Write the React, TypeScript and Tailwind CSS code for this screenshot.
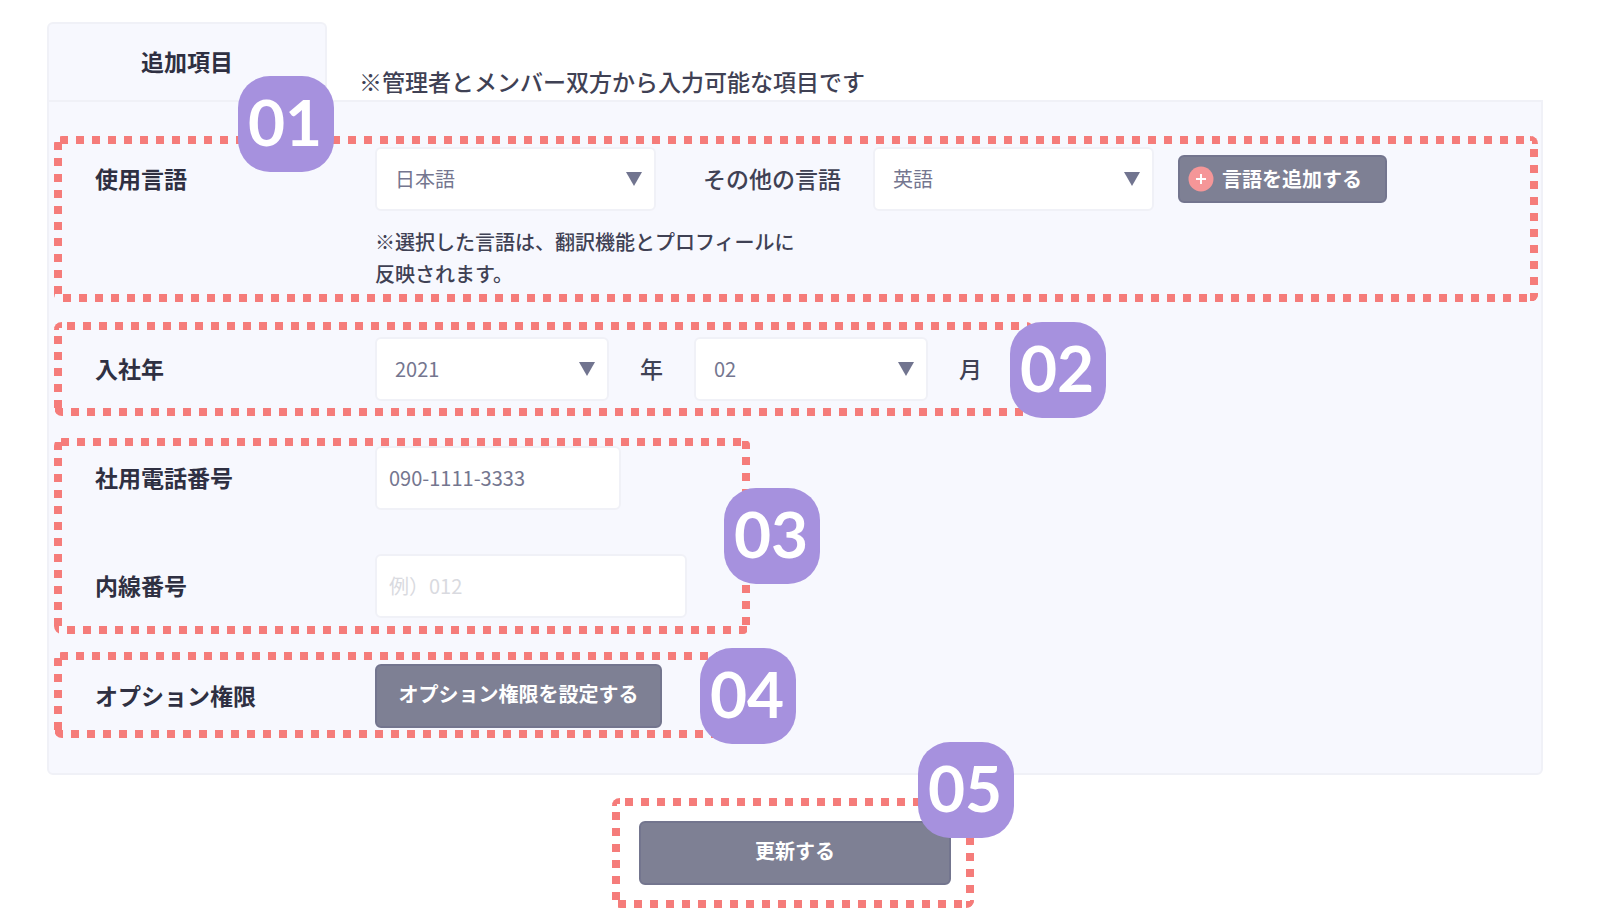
import type { ReactNode } from "react";

type Phases = { top: number; right?: number; bottom: number; left: number };

/* Square-dotted outline. Each phase is where a side's first dot starts. */
function DottedFrame({ top, right, bottom, left }: Phases) {
  const line = { stroke: "#f57c7a", strokeWidth: 8, strokeDasharray: "8 8" };
  return (
    <svg className="pointer-events-none absolute inset-0 size-full rounded-lg" aria-hidden="true">
      <line {...line} x1="0" y1="4" x2="100%" y2="4" strokeDashoffset={-top} />
      <line {...line} x1="4" y1="0" x2="4" y2="100%" strokeDashoffset={-left} />
      <svg y="100%" overflow="visible">
        <line {...line} x1="0" y1="-4" x2="100%" y2="-4" strokeDashoffset={-bottom} />
      </svg>
      {right !== undefined && (
        <svg x="100%" overflow="visible">
          <line {...line} x1="-4" y1="0" x2="-4" y2="100%" strokeDashoffset={-right} />
        </svg>
      )}
    </svg>
  );
}

function Badge({ children, place }: { children: string; place: string }) {
  return (
    <span
      className={`absolute z-10 flex size-24 items-center justify-center rounded-4xl bg-[#a691de] pr-0.5 pb-1 font-['Lato',sans-serif] text-[64px] leading-none font-bold text-white ${place}`}
    >
      {children}
    </span>
  );
}

function Group({ className, phases, children }: { className: string; phases: Phases; children: ReactNode }) {
  return (
    <div className={`relative ${className}`}>
      {children}
      <DottedFrame {...phases} />
    </div>
  );
}

function Row({ label, htmlFor, children }: { label: string; htmlFor: string; children: ReactNode }) {
  return (
    <div className="flex items-center">
      <label
        htmlFor={htmlFor}
        className="w-[321px] shrink-0 pb-0.5 pl-[41px] text-[23px] leading-8 font-bold text-[#2f3042]"
      >
        {label}
      </label>
      {children}
    </div>
  );
}

function Select({ id, label, width, options }: { id: string; label?: string; width: string; options: string[] }) {
  return (
    <div className={`relative shrink-0 ${width}`}>
      <select
        id={id}
        aria-label={label}
        className="h-16 w-full appearance-none rounded-md border-2 border-[#f0f1f7] bg-white px-[18px] text-xl text-[#74768f]"
      >
        {options.map((o) => (
          <option key={o}>{o}</option>
        ))}
      </select>
      <svg
        className="pointer-events-none absolute top-[25px] right-3.5 h-3.5 w-4"
        viewBox="0 0 16 14"
        fill="#71748f"
        aria-hidden="true"
      >
        <path d="M0 0h16L8 14z" />
      </svg>
    </div>
  );
}

const inputStyle =
  "h-16 rounded-md border-2 border-[#f0f1f7] bg-white px-3 text-xl text-[#74768f] placeholder:text-[#d9dae0]";
const buttonStyle = "border-2 border-[#73758e] bg-[#7e8094] text-xl font-bold text-white";

export default function App() {
  return (
    <form
      className="min-h-screen bg-white pt-[22px] pr-[57px] pb-3 pl-[47px] font-['Noto_Sans_CJK_JP','Noto_Sans',sans-serif] text-[#3f4154]"
      onSubmit={(e) => e.preventDefault()}
    >
      <header className="flex items-end">
        <h1 className="flex h-[78px] w-[280px] shrink-0 items-center justify-center rounded-t-md border-2 border-b-0 border-[#f0f1f7] bg-[#f7f8fe] pb-0.5 text-[23px] font-bold text-[#2f3042]">
          追加項目
        </h1>
        <p className="ml-8 pb-0.5 text-[23px] leading-[34px] font-medium">
          ※管理者とメンバー双方から入力可能な項目です
        </p>
      </header>

      <section className="rounded-b-md border-2 border-[#f0f1f7] bg-[#f7f8fe] pt-[34px] pr-[3px] pb-[35px] pl-[5px]">
        <Group className="pt-[11px] pb-[11px]" phases={{ top: 6, right: 13, bottom: 9, left: 6 }}>
          <Row label="使用言語" htmlFor="language">
            <Select id="language" width="w-[281px]" options={["日本語", "英語"]} />
            <label htmlFor="other-language" className="ml-[47px] shrink-0 pb-0.5 text-[23px] leading-8 font-medium">
              その他の言語
            </label>
            <div className="ml-8 flex items-center gap-6">
              <Select id="other-language" width="w-[281px]" options={["英語", "日本語"]} />
              <button
                type="button"
                className={`flex h-12 w-[209px] shrink-0 items-center gap-2 rounded-md pl-2 ${buttonStyle}`}
              >
                <svg className="size-[26px]" viewBox="0 0 26 26" aria-hidden="true">
                  <circle cx="13" cy="13" r="12.5" fill="#f59698" />
                  <path d="M13 8v10M8 13h10" stroke="#fff" strokeWidth="2" />
                </svg>
                言語を追加する
              </button>
            </div>
          </Row>
          <p className="mt-[15px] ml-[321px] pb-px text-xl leading-8 font-medium">
            ※選択した言語は、翻訳機能とプロフィールに
            <br />
            反映されます。
          </p>
          <Badge place="-top-[60px] left-[184px]">01</Badge>
        </Group>

        <Group className="mt-5 w-[980px] py-[15px]" phases={{ top: 13, bottom: 1, left: 14 }}>
          <Row label="入社年" htmlFor="join-year">
            <Select id="join-year" width="w-[234px]" options={["2021", "2020", "2019"]} />
            <span className="mx-[31px] pb-0.5 text-[23px] font-medium">年</span>
            <Select id="join-month" label="入社月" width="w-[234px]" options={["02", "03", "04"]} />
            <span className="ml-[31px] pb-0.5 text-[23px] font-medium">月</span>
          </Row>
          <Badge place="top-0 -right-[72px]">02</Badge>
        </Group>

        <Group
          className="mt-[22px] flex w-[696px] flex-col gap-11 pt-2 pb-4"
          phases={{ top: 7, right: 3, bottom: 13, left: 4 }}
        >
          <Row label="社用電話番号" htmlFor="phone">
            <input id="phone" type="tel" defaultValue="090-1111-3333" className={`w-[246px] pb-0.5 ${inputStyle}`} />
          </Row>
          <Row label="内線番号" htmlFor="extension">
            <input id="extension" type="text" placeholder="例）012" className={`w-[312px] pb-0.5 ${inputStyle}`} />
          </Row>
          <Badge place="top-[50px] -right-[70px]">03</Badge>
        </Group>

        <Group className="mt-[18px] w-[686px] pt-3 pb-2.5" phases={{ top: 6, bottom: 1, left: 6 }}>
          <Row label="オプション権限" htmlFor="options">
            <button id="options" type="button" className={`h-16 w-[287px] rounded-md pb-1 ${buttonStyle}`}>
              オプション権限を設定する
            </button>
          </Row>
          <Badge place="-top-1 -right-14">04</Badge>
        </Group>
      </section>

      <div className="mt-[23px] flex justify-center pr-1">
        <Group className="pt-[23px] pr-[23px] pb-[23px] pl-[27px]" phases={{ top: 13, right: 7, bottom: 6, left: 14 }}>
          <button type="submit" className={`block h-16 w-[312px] rounded-md pb-1 ${buttonStyle}`}>
            更新する
          </button>
          <Badge place="-top-14 -right-10">05</Badge>
        </Group>
      </div>
    </form>
  );
}
